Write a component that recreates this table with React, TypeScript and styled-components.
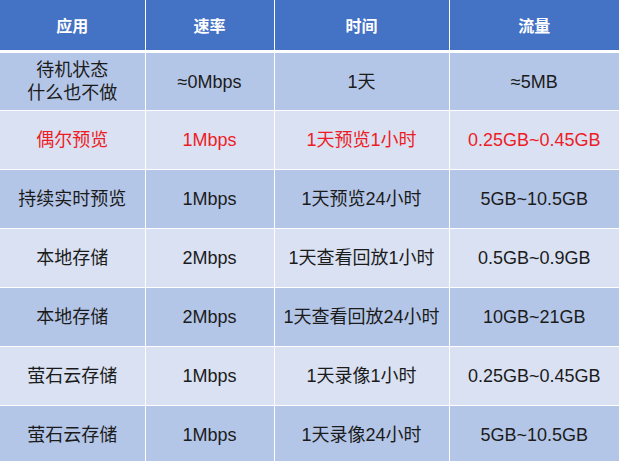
import React from "react";
import styled, { createGlobalStyle } from "styled-components";

const GlobalStyle = createGlobalStyle`
  html, body {
    margin: 0;
    padding: 0;
    background: #ffffff;
  }
  body {
    font-family: "Liberation Sans", "Noto Sans CJK SC", sans-serif;
  }
`;

interface rowProps {
  dark: boolean;
}
interface cellProps {
  red?: boolean;
}

const Table = styled.table`
  width: 619px;
  border-collapse: collapse;
  table-layout: fixed;
`;

const HeadCell = styled.th`
  height: 50px;
  padding: 0;
  background: #4472c4;
  color: #ffffff;
  font-size: 16px;
  font-weight: 700;
  text-align: center;
  vertical-align: middle;
  border-left: 1.5px solid #ffffff;
  border-bottom: 3px solid #ffffff;
  &:first-child {
    border-left: none;
  }
`;

const Row = styled.tr<rowProps>`
  height: 59px;
  background: ${(props) => (props.dark ? "#b4c6e7" : "#d9e1f2")};
`;

const Cell = styled.td<cellProps>`
  padding: 1px 0 0;
  text-align: center;
  vertical-align: middle;
  font-size: 18px;
  line-height: 23px;
  color: ${(props) => (props.red ? "#ee1c25" : "#1b1b1b")};
  border-left: 1.5px solid #ffffff;
  border-top: 1px solid #ffffff;
  &:first-child {
    border-left: none;
  }
`;

const rows = [
  { app: ["待机状态", "什么也不做"], rate: "≈0Mbps", time: "1天", flow: "≈5MB" },
  { app: ["偶尔预览"], rate: "1Mbps", time: "1天预览1小时", flow: "0.25GB~0.45GB", red: true },
  { app: ["持续实时预览"], rate: "1Mbps", time: "1天预览24小时", flow: "5GB~10.5GB" },
  { app: ["本地存储"], rate: "2Mbps", time: "1天查看回放1小时", flow: "0.5GB~0.9GB" },
  { app: ["本地存储"], rate: "2Mbps", time: "1天查看回放24小时", flow: "10GB~21GB" },
  { app: ["萤石云存储"], rate: "1Mbps", time: "1天录像1小时", flow: "0.25GB~0.45GB" },
  { app: ["萤石云存储"], rate: "1Mbps", time: "1天录像24小时", flow: "5GB~10.5GB" },
];

const App = () => {
  return (
    <>
      <GlobalStyle />
      <Table>
        <colgroup>
          <col style={{ width: 145 }} />
          <col style={{ width: 129 }} />
          <col style={{ width: 175 }} />
          <col style={{ width: 170 }} />
        </colgroup>
        <thead>
          <tr>
            <HeadCell>应用</HeadCell>
            <HeadCell>速率</HeadCell>
            <HeadCell>时间</HeadCell>
            <HeadCell>流量</HeadCell>
          </tr>
        </thead>
        <tbody>
          {rows.map((r, i) => (
            <Row key={i} dark={i % 2 === 0}>
              <Cell red={r.red}>
                {r.app.map((line, j) => (
                  <div key={j}>{line}</div>
                ))}
              </Cell>
              <Cell red={r.red}>{r.rate}</Cell>
              <Cell red={r.red}>{r.time}</Cell>
              <Cell red={r.red}>{r.flow}</Cell>
            </Row>
          ))}
        </tbody>
      </Table>
    </>
  );
};

export default App;
